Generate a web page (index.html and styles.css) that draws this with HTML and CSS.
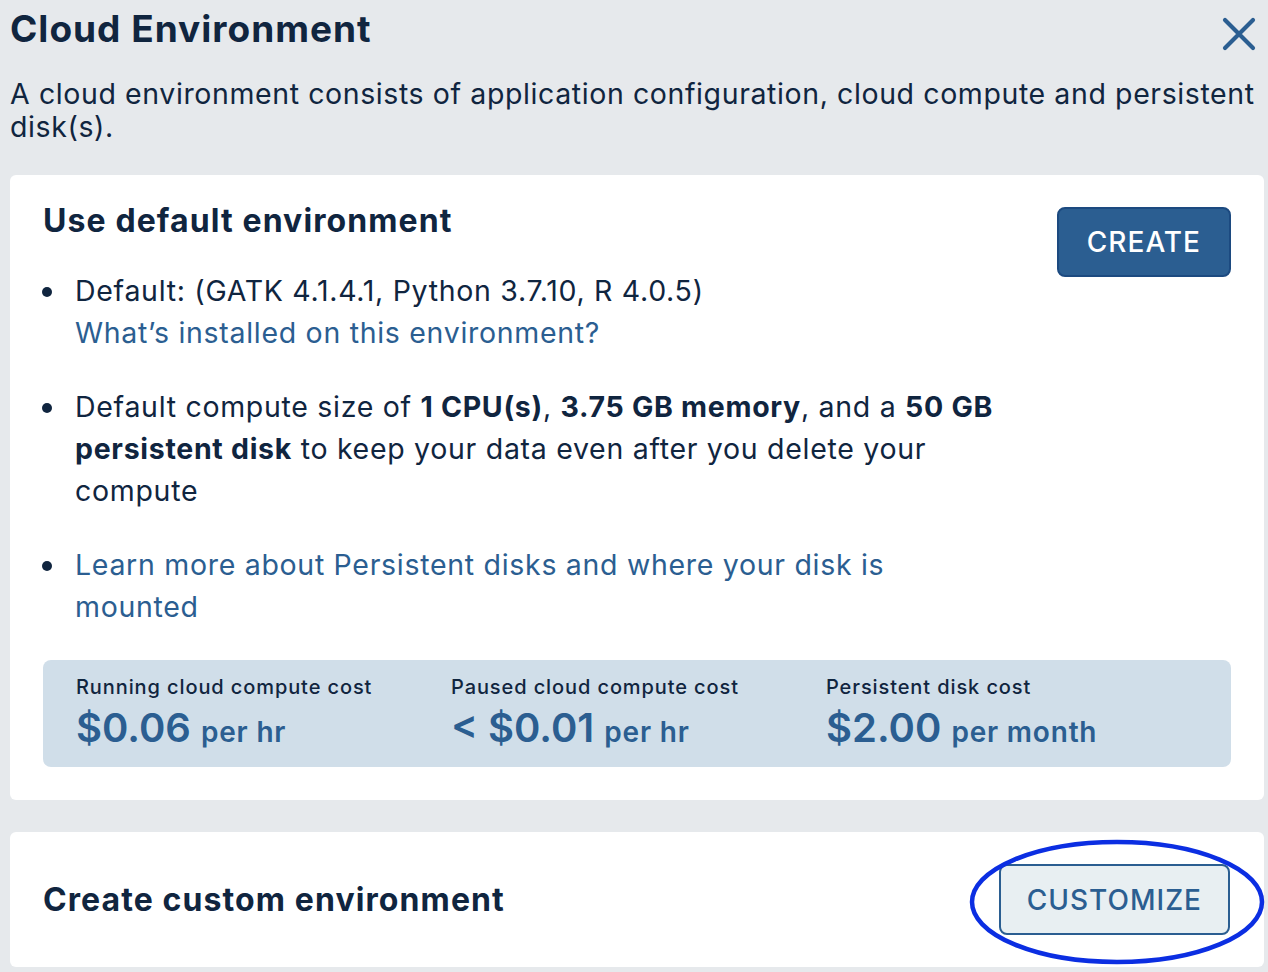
FILE: index.html
```html
<!DOCTYPE html>
<html lang="en">
<head>
<meta charset="utf-8">
<title>Cloud Environment</title>
<link rel="stylesheet" href="styles.css">
</head>
<body>
<div class="modal">
  <header class="modal-header">
    <h1 class="title">Cloud Environment</h1>
    <button class="close" aria-label="Close">
      <svg width="34" height="34" viewBox="0 0 34 34"><path d="M3 3 L31 31 M31 3 L3 31" stroke="#2b5e91" stroke-width="4.2" stroke-linecap="round" fill="none"/></svg>
    </button>
  </header>
  <p class="intro">A cloud environment consists of application configuration, cloud compute and persistent disk(s).</p>

  <section class="card card-default">
    <div class="card-top">
      <div class="card-main">
        <h2 class="card-title">Use default environment</h2>
        <ul class="features">
          <li>Default: (GATK 4.1.4.1, Python 3.7.10, R 4.0.5)<br><a class="link" href="#">What’s installed on this environment?</a></li>
          <li>Default compute size of <b>1 CPU(s)</b>, <b>3.75 GB memory</b>, and a <b>50 GB persistent disk</b> to keep your data even after you delete your compute</li>
          <li><a class="link" href="#">Learn more about Persistent disks and where your disk is mounted</a></li>
        </ul>
      </div>
      <button class="btn btn-primary">CREATE</button>
    </div>
    <div class="costs">
      <div class="cost">
        <div class="cost-label">Running cloud compute cost</div>
        <div class="cost-value">$0.06 <span class="cost-unit">per hr</span></div>
      </div>
      <div class="cost">
        <div class="cost-label">Paused cloud compute cost</div>
        <div class="cost-value">&lt; $0.01 <span class="cost-unit">per hr</span></div>
      </div>
      <div class="cost">
        <div class="cost-label">Persistent disk cost</div>
        <div class="cost-value">$2.00 <span class="cost-unit">per month</span></div>
      </div>
    </div>
  </section>

  <section class="card card-custom">
    <h2 class="card-title">Create custom environment</h2>
    <div class="customize-wrap">
      <button class="btn btn-secondary">CUSTOMIZE</button>
      <svg class="annotation" width="298" height="128" viewBox="0 0 298 128"><ellipse cx="149" cy="64" rx="145" ry="60" fill="none" stroke="#0b2ee2" stroke-width="4.5"/></svg>
    </div>
  </section>
</div>
</body>
</html>
```
FILE: styles.css
```css
html, body {
  margin: 0;
  background: #e6e9ec;
}
body {
  font-family: Inter, "Open Sans", sans-serif;
  color: #10253f;
}
.modal {
  padding: 6px 4px 0 10px;
}
.modal-header {
  display: flex;
  justify-content: space-between;
  align-items: flex-start;
}
.title {
  margin: 0;
  font-size: 37px;
  font-weight: 700;
  line-height: 46px;
  letter-spacing: 1px;
}
.close {
  margin: 11px 8px 0 0;
  padding: 0;
  border: 0;
  background: none;
  display: flex;
}
.intro {
  margin: 25px 0 0;
  font-size: 28.5px;
  line-height: 33px;
  letter-spacing: 0.6px;
}
.card {
  background: #fff;
  border-radius: 6px;
}
.card-default {
  margin-top: 32px;
  padding: 32px 33px 33px;
}
.card-top {
  display: flex;
  justify-content: space-between;
  align-items: flex-start;
}
.card-main {
  width: 962px;
}
.card-title {
  margin: 0;
  font-size: 32px;
  font-weight: 700;
  line-height: 28px;
  letter-spacing: 1.1px;
}
.features {
  margin: 35px 0 0;
  padding-left: 32px;
  list-style: none;
  font-size: 28.5px;
  line-height: 42px;
  letter-spacing: 0.7px;
}
.features li::before {
  content: "";
  display: inline-block;
  width: 10px;
  height: 10px;
  border-radius: 50%;
  background: #10253f;
  margin-left: -33px;
  margin-right: 23px;
  vertical-align: 4px;
}
.features li + li {
  margin-top: 32px;
}
.features b {
  font-weight: 700;
}
.link {
  color: #2b5e91;
  text-decoration: none;
}
.btn {
  font-family: inherit;
  font-size: 28px;
  font-weight: 500;
  letter-spacing: 1px;
  border-radius: 8px;
  display: flex;
  align-items: center;
  justify-content: center;
}
.btn-primary {
  height: 70px;
  padding: 0 28px;
  background: #2b5e91;
  color: #fff;
  border: 2px solid #1c4a80;
}
.costs {
  margin-top: 32px;
  background: #d0dee9;
  border-radius: 8px;
  padding: 15px 33px 15px;
  display: grid;
  grid-template-columns: repeat(3, 375px);
}
.cost-label {
  font-size: 20px;
  font-weight: 500;
  line-height: 24px;
  letter-spacing: 0.9px;
}
.cost-value {
  margin-top: 5px;
  font-size: 40px;
  font-weight: 600;
  line-height: 48px;
  color: #2b5e91;
}
.cost-unit {
  font-size: 28px;
  line-height: 1;
  letter-spacing: 0.8px;
}
.card-custom {
  margin-top: 32px;
  padding: 32px 34px 32px 33px;
  display: flex;
  justify-content: space-between;
  align-items: center;
}
.customize-wrap {
  position: relative;
}
.btn-secondary {
  height: 71px;
  padding: 0 26px;
  background: #e8eff2;
  color: #2b5e91;
  border: 2px solid #2b5e91;
}
.annotation {
  position: absolute;
  left: -31px;
  top: -26px;
  pointer-events: none;
}
```
